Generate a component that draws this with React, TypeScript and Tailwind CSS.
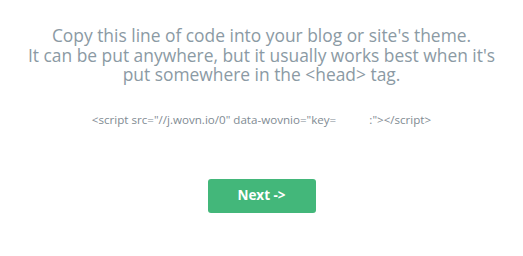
export default function App() {
  return (
    <div className="w-[523px] h-[256px] bg-white flex flex-col items-center" style={{ fontFamily: '"Open Sans", Lato, sans-serif' }}>
      <p className="mt-[26px] text-center text-[17.4px] leading-[19.5px] text-[#8b9aa4]">
        Copy this line of code into your blog or site's theme.
        <br />
        It can be put anywhere, but it usually works best when it's
        <br />
        put somewhere in the &lt;head&gt; tag.
      </p>
      <p className="mt-[28px] text-[11.6px] leading-[14px] text-[#7f8b93] whitespace-pre">
        {'<script src="//j.wovn.io/0" data-wovnio="key=           :"></script>'}
      </p>
      <button className="mt-[52px] w-[108px] h-[34px] rounded-[3px] bg-[#43b77a] text-white text-[13.5px] font-bold">
        Next -&gt;
      </button>
    </div>
  )
}
